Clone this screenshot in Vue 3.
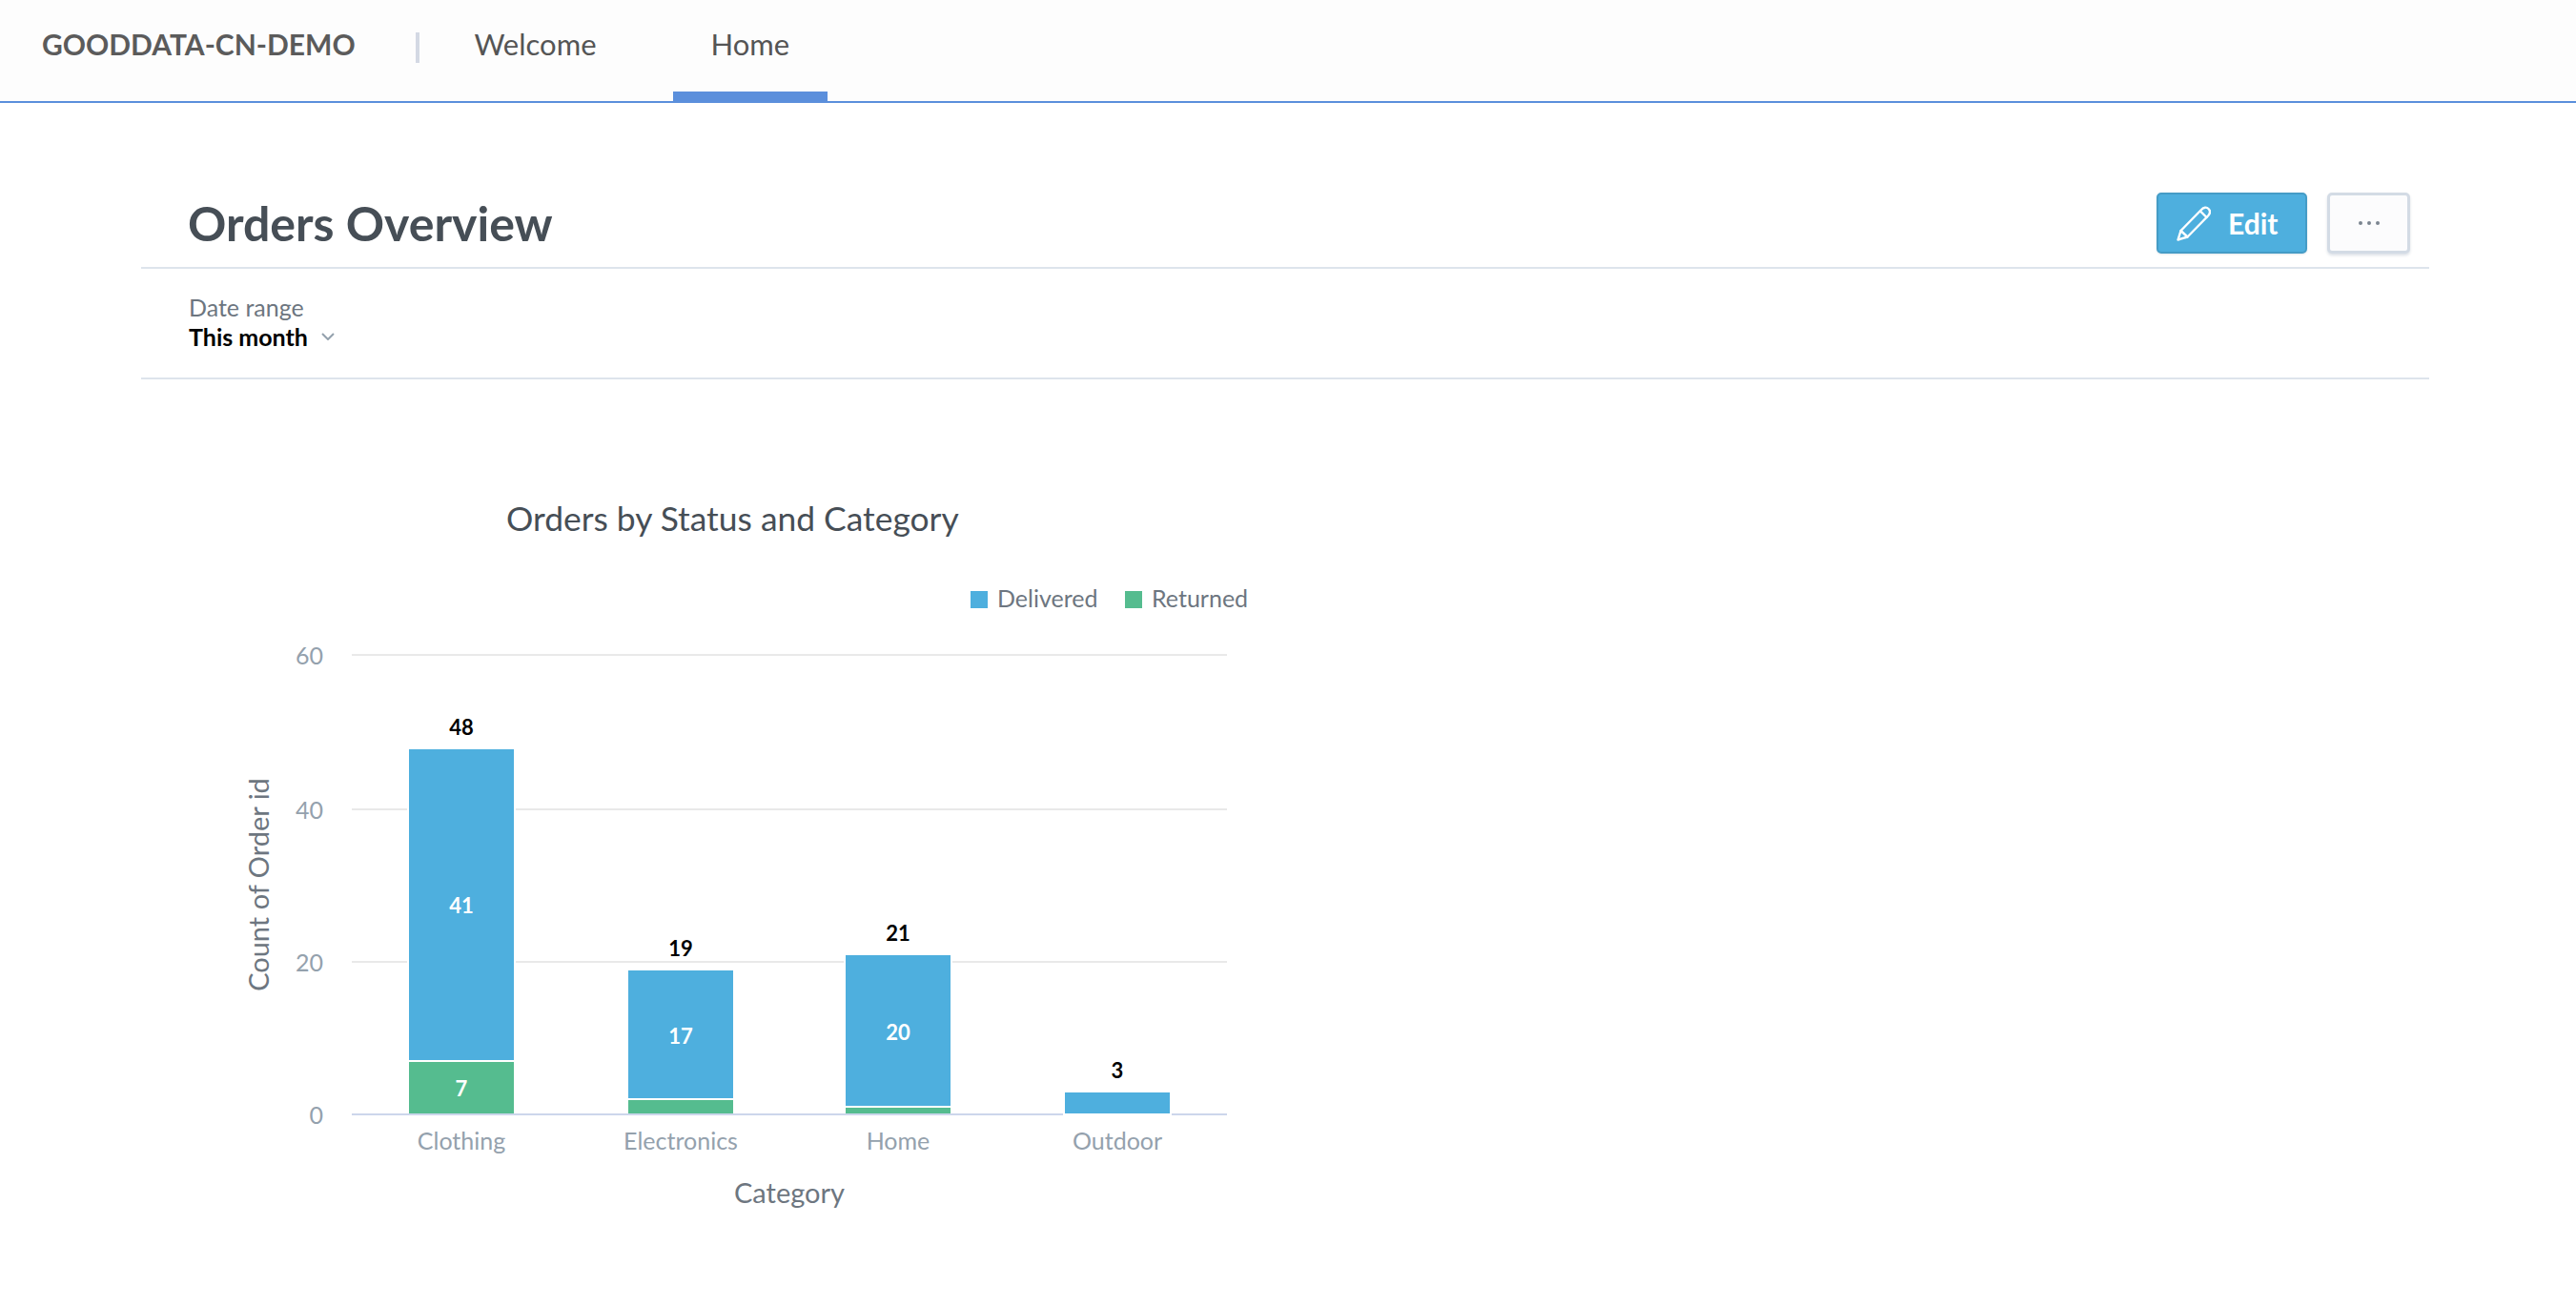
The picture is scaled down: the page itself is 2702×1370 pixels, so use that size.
<template>
	<div class="page">
		<header class="topbar">
			<div class="brand">GOODDATA-CN-DEMO</div>
			<span class="divider"></span>
			<nav class="tabs">
				<a class="tab">Welcome</a>
				<a class="tab active">Home</a>
			</nav>
		</header>
		<main class="content">
			<div class="title-row">
				<h1>Orders Overview</h1>
				<button class="btn edit">
					<svg class="pencil" viewBox="0 0 36 37" fill="none" stroke="#fff" stroke-width="2.4" stroke-linejoin="round" stroke-linecap="round">
						<path d="M1.5 35.5 L4.5 26 L26 4 C28.5 1.2 31.5 1 33.5 3 C35.5 5 35.3 8 33 10.5 L11.5 32.5 Z" />
						<path d="M25 5.5 L31.5 12" />
						<path d="M4.5 26 L11.5 32.5" />
					</svg>
					Edit
				</button>
				<button class="btn more"><i></i><i></i><i></i></button>
			</div>
			<div class="filter-bar">
				<div class="filter-label">Date range</div>
				<div class="filter-value">
					This month
					<svg class="chevron" viewBox="0 0 14 8" fill="none" stroke="#94a1ad" stroke-width="2">
						<path d="M1 1 L7 7 L13 1" />
					</svg>
				</div>
			</div>
			<svg class="chart" viewBox="240 500 1100 800" width="1100" height="800">
				<text class="chart-title" x="531" y="557">Orders by Status and Category</text>

				<rect x="1018" y="620" width="18" height="18" fill="#4eafde" />
				<text class="legend" x="1046" y="637">Delivered</text>
				<rect x="1180" y="620" width="18" height="18" fill="#55bc8f" />
				<text class="legend" x="1208" y="637">Returned</text>

				<g v-for="tick of ticks" :key="tick.label">
					<line x1="369" x2="1287" :y1="tick.y" :y2="tick.y" :stroke="tick.label === '0' ? '#ccd6eb' : '#e9e9e9'" stroke-width="2" />
					<text class="axis-label" x="339" :y="tick.y + 10" text-anchor="end">{{tick.label}}</text>
				</g>

				<g v-for="bar of bars" :key="bar.name">
					<rect :x="bar.x - 1" :y="bar.top - 1" width="112" :height="bar.mid - bar.top + 2" fill="#4eafde" stroke="#fff" stroke-width="2" />
					<rect v-if="bar.mid < 1168" :x="bar.x" :y="bar.mid + 2" width="110" :height="1168 - bar.mid - 2" fill="#55bc8f" />
					<text class="total" :x="bar.x + 55" :y="bar.top - 15" text-anchor="middle">{{bar.total}}</text>
					<text v-if="bar.blue" class="inner" :x="bar.x + 55" :y="bar.blueY" text-anchor="middle">{{bar.blue}}</text>
					<text v-if="bar.green" class="inner" :x="bar.x + 55" :y="bar.greenY" text-anchor="middle">{{bar.green}}</text>
					<text class="axis-label" :x="bar.x + 55" y="1206" text-anchor="middle">{{bar.name}}</text>
				</g>

				<text class="axis-title" x="828" y="1262" text-anchor="middle">Category</text>
				<text class="axis-title" transform="translate(282 928) rotate(-90)" text-anchor="middle">Count of Order id</text>
			</svg>
		</main>
	</div>
</template>

<style scoped>
	.page
	{
		font-family: Lato, "Liberation Sans", sans-serif;
		color: #464e56;
	}

	.topbar
	{
		display: flex;
		height: 108px;
		box-sizing: border-box;
		background: #fdfdfd;
		border-bottom: 2px solid #5b8fdc;
	}

	.brand
	{
		width: 436px;
		box-sizing: border-box;
		padding: 28px 0 0 44px;
		font-size: 30px;
		line-height: 36px;
		font-weight: 700;
		color: #5b5b5b;
	}

	.divider
	{
		width: 4px;
		height: 32px;
		margin: 34px 18px 0 0;
		background: #d4d9e4;
	}

	.tabs
	{
		display: flex;
		gap: 41px;
	}

	.tab
	{
		box-sizing: border-box;
		padding: 28px 39.5px 0;
		font-size: 31px;
		line-height: 36px;
		color: #555;
	}

	.tab.active
	{
		border-bottom: 10px solid #5b8fdc;
	}

	.content
	{
		width: 2400px;
		margin-left: 148px;
	}

	.title-row
	{
		display: flex;
		align-items: center;
		gap: 21px;
		padding: 94px 20px 14px 49px;
		border-bottom: 2px solid #dde4ec;
	}

	h1
	{
		flex: 1;
		margin: 0;
		font-size: 50px;
		line-height: 64px;
		font-weight: 700;
		color: #464e56;
	}

	.btn
	{
		display: flex;
		align-items: center;
		justify-content: center;
		height: 64px;
		box-sizing: border-box;
		border-radius: 5px;
		font-family: inherit;
	}

	.edit
	{
		width: 158px;
		justify-content: flex-start;
		gap: 18px;
		padding: 0 0 0 19px;
		border: 2px solid #459cc6;
		background: #4eafde;
		color: #fff;
		font-size: 30px;
		font-weight: 700;
		box-shadow: 0 1px 2px rgba(20, 56, 93, .12);
	}

	.pencil
	{
		width: 36px;
		height: 37px;
	}

	.more
	{
		width: 87px;
		gap: 5px;
		border: 3px solid #d3dbe5;
		background: #fcfcfd;
		box-shadow: 0 2px 3px rgba(20, 56, 93, .15);
	}

	.more i
	{
		width: 4px;
		height: 4px;
		border-radius: 50%;
		background: #7b8590;
	}

	.filter-bar
	{
		padding: 25px 0 28px 50px;
		border-bottom: 2px solid #dde4ec;
		line-height: 30px;
		font-size: 25px;
	}

	.filter-label
	{
		color: #6d7680;
	}

	.filter-value
	{
		display: flex;
		align-items: center;
		gap: 14px;
		padding-top: 1px;
		font-weight: 700;
		color: #000;
	}

	.chevron
	{
		width: 14px;
		height: 8px;
	}

	.chart
	{
		display: block;
		margin: 102px 0 0 92px;
	}

	.chart text
	{
		font-family: Lato, "Liberation Sans", sans-serif;
	}

	.chart-title
	{
		font-size: 35.4px;
		fill: #464e56;
	}

	.legend
	{
		font-size: 25px;
		fill: #6d7680;
	}

	.axis-label
	{
		font-size: 25px;
		fill: #94a1ad;
	}

	.axis-title
	{
		font-size: 29px;
		fill: #6d7680;
	}

	.total
	{
		font-size: 22px;
		font-weight: 700;
		fill: #000;
	}

	.inner
	{
		font-size: 22px;
		font-weight: 700;
		fill: #fff;
	}
</style>

<script setup>
	const ticks = [
		{ label: "60", y: 687 },
		{ label: "40", y: 849 },
		{ label: "20", y: 1009 },
		{ label: "0", y: 1169 },
	];

	const bars = [
		{ name: "Clothing", x: 429, top: 786, mid: 1112, total: 48, blue: 41, blueY: 958, green: 7, greenY: 1150 },
		{ name: "Electronics", x: 659, top: 1018, mid: 1152, total: 19, blue: 17, blueY: 1095 },
		{ name: "Home", x: 887, top: 1002, mid: 1160, total: 21, blue: 20, blueY: 1091 },
		{ name: "Outdoor", x: 1117, top: 1146, mid: 1168, total: 3 },
	];
</script>
